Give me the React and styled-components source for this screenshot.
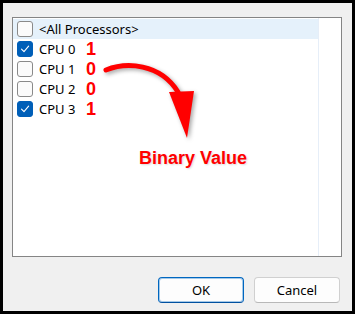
import React from "react";
import styled, { createGlobalStyle } from "styled-components";

const cpus = [
  { label: "CPU 0", checked: true, bit: "1" },
  { label: "CPU 1", checked: false, bit: "0" },
  { label: "CPU 2", checked: false, bit: "0" },
  { label: "CPU 3", checked: true, bit: "1" },
];

const Check = () => (
  <svg width="10" height="10" viewBox="0 0 10 10">
    <path d="M1.5 5.2 L4 7.6 L8.6 2.2" fill="none" stroke="#fff" strokeWidth="1.1" strokeLinecap="round" strokeLinejoin="round" />
  </svg>
);

const Arrow = () => (
  <ArrowSvg width="355" height="314" viewBox="0 0 355 314">
    <path d="M106 70 C 126 62, 160 63, 178 92" fill="none" stroke="#ff0000" strokeWidth="5" strokeLinecap="round" />
    <polygon points="169,92 194,91 187,138" fill="#ff0000" />
  </ArrowSvg>
);

const App = () => {
  return (
    <>
      <Global />
      <Frame>
        <ListBox>
          <Column>
            <Row $selected>
              <Box />
              <Label>&lt;All Processors&gt;</Label>
            </Row>
            {cpus.map((c) => (
              <Row key={c.label}>
                <Box $checked={c.checked}>{c.checked && <Check />}</Box>
                <Label $fixed>{c.label}</Label>
                <Bit>{c.bit}</Bit>
              </Row>
            ))}
          </Column>
        </ListBox>
        <ButtonRow>
          <Button $primary>OK</Button>
          <Button>Cancel</Button>
        </ButtonRow>
        <Arrow />
        <Note>Binary Value</Note>
      </Frame>
    </>
  );
};

export default App;

const Global = createGlobalStyle`
  html, body {
    margin: 0;
    padding: 0;
    background: #f0f0f0;
  }
`;
const Frame = styled.div`
  position: relative;
  box-sizing: border-box;
  width: 355px;
  height: 314px;
  border: 3px solid #000;
  background: #f0f0f0;
  padding: 14px 11px 0 9px;
  font-family: "Segoe UI", "Noto Sans", sans-serif;
  font-size: 13px;
  color: #000;
`;
const ListBox = styled.div`
  box-sizing: border-box;
  width: 330px;
  height: 240px;
  border: 1px solid #858585;
  background: #fff;
  display: flex;
`;
const Column = styled.div`
  width: 305px;
  padding-top: 1px;
  border-right: 1px solid #e6eef8;
`;
const Row = styled.div`
  height: 20px;
  display: flex;
  align-items: center;
  padding-left: 4px;
  background: ${(p) => (p.$selected ? "#e5f1fb" : "transparent")};
`;
const Box = styled.div`
  box-sizing: border-box;
  width: 16px;
  height: 16px;
  border-radius: 3px;
  border: 1px solid ${(p) => (p.$checked ? "#005fb8" : "#8a8a8a")};
  background: ${(p) => (p.$checked ? "#005fb8" : "#fbfbfb")};
  display: flex;
  align-items: center;
  justify-content: center;
  margin-right: 6px;
`;
const Label = styled.span`
  width: ${(p) => (p.$fixed ? "47px" : "auto")};
  line-height: 20px;
`;
const Bit = styled.span`
  font-family: "Liberation Sans", Arial, sans-serif;
  font-weight: bold;
  font-size: 18px;
  color: #ff0000;
  line-height: 20px;
`;
const ButtonRow = styled.div`
  display: flex;
  justify-content: flex-end;
  gap: 10px;
  margin-top: 20px;
  padding-right: 1px;
`;
const Button = styled.button`
  box-sizing: border-box;
  width: 86px;
  height: 26px;
  border-radius: 4px;
  background: #fdfdfd;
  border: 1px solid ${(p) => (p.$primary ? "#0067c0" : "#d0d0d0")};
  border-bottom-color: ${(p) => (p.$primary ? "#0050a0" : "#b8b8b8")};
  box-shadow: ${(p) => (p.$primary ? "inset 0 0 0 1px rgba(0,103,192,0.35)" : "none")};
  font-family: "Segoe UI", "Noto Sans", sans-serif;
  font-size: 13px;
  color: #000;
  padding: 0;
`;
const ArrowSvg = styled.svg`
  position: absolute;
  left: -3px;
  top: -3px;
  pointer-events: none;
  filter: drop-shadow(2px 2px 2px rgba(0, 0, 0, 0.35));
`;
const Note = styled.div`
  position: absolute;
  left: 136px;
  top: 145px;
  font-family: "Liberation Sans", Arial, sans-serif;
  font-weight: bold;
  font-size: 18px;
  color: #ff0000;
  text-shadow: 1px 1px 2px rgba(0, 0, 0, 0.15);
`;
